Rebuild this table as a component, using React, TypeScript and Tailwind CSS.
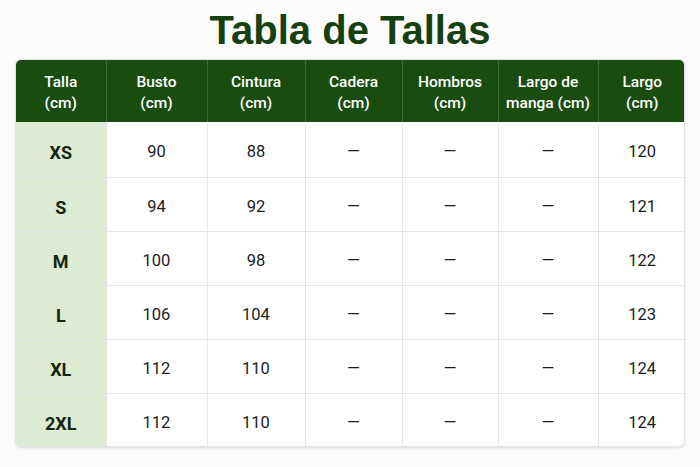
const headers = [
  ["Talla", "(cm)"],
  ["Busto", "(cm)"],
  ["Cintura", "(cm)"],
  ["Cadera", "(cm)"],
  ["Hombros", "(cm)"],
  ["Largo de", "manga (cm)"],
  ["Largo", "(cm)"],
];

const widths = ["w-[90px]", "w-[101px]", "w-[98px]", "w-[97px]", "w-[96px]", "w-[100px]", "w-[88px]"];

const rows = [
  ["XS", "90", "88", "—", "—", "—", "120"],
  ["S", "94", "92", "—", "—", "—", "121"],
  ["M", "100", "98", "—", "—", "—", "122"],
  ["L", "106", "104", "—", "—", "—", "123"],
  ["XL", "112", "110", "—", "—", "—", "124"],
  ["2XL", "112", "110", "—", "—", "—", "124"],
];

export default function App() {
  return (
    <div className="h-[467px] w-[700px] bg-[#fbfbfa] font-['Roboto',sans-serif]">
      <h1 className="pt-[6px] text-center font-['Liberation_Sans',Arial,sans-serif] text-[40px] font-bold leading-[48px] text-[#163f12]">
        Tabla de Tallas
      </h1>
      <div className="mx-[15px] mt-[5px] overflow-hidden rounded-md border border-[#e2e2e2] bg-white shadow-sm">
        <table className="w-full table-fixed border-collapse">
          <thead>
            <tr className="h-[62px] bg-[#1a4c10] text-[15.5px] font-medium leading-[21px] text-white">
              {headers.map((h, i) => (
                <th
                  key={i}
                  className={`${widths[i]} border-l border-[#3f6b36] pt-[4px] font-medium first:border-l-0`}
                >
                  {h[0]}
                  <br />
                  {h[1]}
                </th>
              ))}
            </tr>
          </thead>
          <tbody>
            {rows.map((r, ri) => (
              <tr key={ri} className="h-[54px] border-t border-[#e6e6e6] first:h-[55px] first:border-t-0 last:h-[53px]">
                {r.map((c, ci) =>
                  ci === 0 ? (
                    <td
                      key={ci}
                      className="bg-[#dcebd1] pt-[7px] text-center text-[18px] font-bold text-[#14260f]"
                    >
                      {c}
                    </td>
                  ) : (
                    <td
                      key={ci}
                      className="border-l border-[#e6e6e6] pt-[7px] text-center text-[16.5px] text-[#1c1c1c]"
                    >
                      {c}
                    </td>
                  ),
                )}
              </tr>
            ))}
          </tbody>
        </table>
      </div>
    </div>
  );
}
